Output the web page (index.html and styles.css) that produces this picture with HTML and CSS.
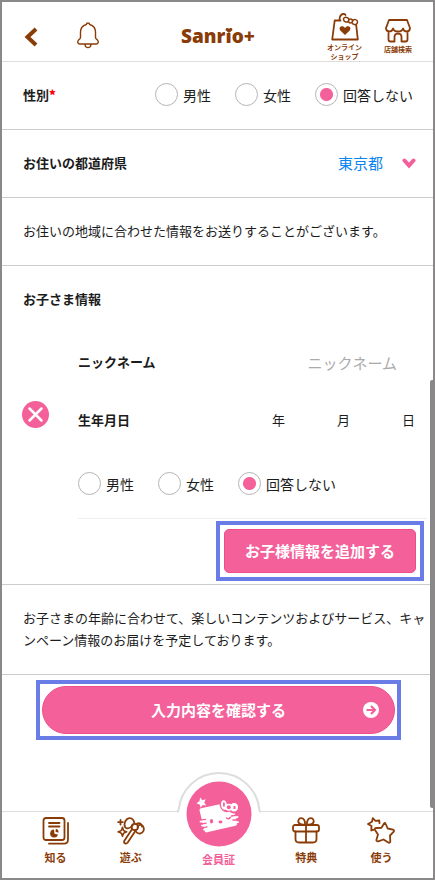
FILE: index.html
```html
<!DOCTYPE html>
<html lang="ja">
<head>
<meta charset="utf-8">
<meta name="viewport" content="width=device-width, initial-scale=1">
<title>Sanrio+</title>
<link rel="stylesheet" href="styles.css">
</head>
<body>
<header class="header">
  <div class="header-side">
    <a class="back" href="#" aria-label="戻る">
      <svg width="14" height="20" viewBox="0 0 14 20"><path d="M12 2 3.500 10l8.500 8" class="thick"/></svg>
    </a>
    <a class="bell" href="#" aria-label="お知らせ">
      <svg width="24" height="28" viewBox="0 0 24 28" class="line"><path d="M10.300 3.500c.4-2 3-2 3.400 0 3.500 1 5.800 4 5.800 7.500v5.500c0 1 .7 1.500 1.700 2.300 2 1.700 1 4.200-1 4.200H3.800c-2 0-3-2.500-1-4.200 1-.8 1.700-1.300 1.700-2.300V11c0-3.500 2.300-6.500 5.800-7.500zM9 23.500c.4 4.200 5.600 4.200 6 0"/></svg>
    </a>
  </div>
  <a class="logo" href="#">Sanrio+<svg class="logo-heart" width="8" height="5" viewBox="0 0 8 5"><path d="M4 5 1 2.500C-.5.8 2.300-1 4 .8 5.700-1 8.500.8 7 2.500z"/></svg></a>
  <div class="header-side header-links">
    <a class="header-link" href="#">
      <svg width="28" height="28" viewBox="0 0 28 28" class="line bold"><path d="M9.500 7.500H3.700L1.200 26.500h25.600L25.200 12M8.500 7c0-3 1.200-5.500 3.500-6 1.200-.2 2 .2 2.500 1"/><path class="fine" d="M18 6.500c-1-3-5.500-3-5.500-.2 0 2.500 3 3.500 5 2M21.500 8c1.500-2.500 5-1.500 5 1s-2.500 3.500-5 1.700"/><circle class="fine" cx="19.500" cy="8" r="2"/><path class="solid" d="M14 22 9.300 17.500c-2.600-3.500 2.500-6 4.700-2.500 2.200-3.500 7.300-1 4.700 2.500z"/></svg>
      <span>オンライン<br>ショップ</span>
    </a>
    <a class="header-link shop" href="#">
      <svg width="26" height="24" viewBox="0 0 26 24" class="line bold"><path d="M4 1h18l3 8c0 4.500-6 4.500-7 .5-1 4-9 4-10 0-1 4-7 4-7-.5zM3.500 13.500v7c0 1.500.7 2 2 2h4V18c0-4.500 7-4.500 7 0v4.500h4c1.300 0 2-.5 2-2v-7"/></svg>
      <span>店舗検索</span>
    </a>
  </div>
</header>

<main class="main">
  <form>
    <div class="row" role="radiogroup" aria-labelledby="sex-label">
      <span class="label" id="sex-label">性別<b class="required">*</b></span>
      <div class="radios">
        <label class="radio"><input type="radio" name="sex">男性</label>
        <label class="radio"><input type="radio" name="sex">女性</label>
        <label class="radio"><input type="radio" name="sex" checked>回答しない</label>
      </div>
    </div>

    <div class="row">
      <label class="label" for="pref">お住いの都道府県</label>
      <div class="select">
        <select id="pref"><option>東京都</option></select>
        <svg class="chevron" width="14" height="11" viewBox="0 0 14 11"><path d="m2.500 2.500 4.500 5 4.500-5"/></svg>
      </div>
    </div>

    <p class="row text">お住いの地域に合わせた情報をお送りすることがございます。</p>

    <section class="children">
      <h2 class="label children-title">お子さま情報</h2>
      <div class="child">
        <button type="button" class="remove" aria-label="削除">
          <svg width="27" height="27" viewBox="0 0 27 27"><path d="m7.500 7.500 12 12m0-12-12 12"/></svg>
        </button>
        <div class="child-fields">
          <div class="field">
            <label class="label" for="nick">ニックネーム</label>
            <input class="nick" id="nick" type="text" placeholder="ニックネーム">
          </div>
          <div class="field">
            <span class="label">生年月日</span>
            <div class="date">
              <label><input type="text" inputmode="numeric">年</label>
              <label><input type="text" inputmode="numeric">月</label>
              <label><input type="text" inputmode="numeric">日</label>
            </div>
          </div>
          <div class="radios child-radios" role="radiogroup" aria-label="性別">
            <label class="radio"><input type="radio" name="child-sex">男性</label>
            <label class="radio"><input type="radio" name="child-sex">女性</label>
            <label class="radio"><input type="radio" name="child-sex" checked>回答しない</label>
          </div>
        </div>
      </div>
      <div class="highlight add-box">
        <button type="button" class="btn add">お子様情報を追加する</button>
      </div>
    </section>

    <p class="note text">お子さまの年齢に合わせて、楽しいコンテンツおよびサービス、キャンペーン情報のお届けを予定しております。</p>

    <div class="highlight submit-box">
      <button type="submit" class="btn submit">入力内容を確認する
        <svg class="submit-arrow" width="16" height="16" viewBox="0 0 16 16"><circle cx="8" cy="8" r="8"/><path d="M3.500 8h8M8 4l4 4-4 4"/></svg>
      </button>
    </div>
  </form>
  <div class="scrollbar"></div>
</main>

<nav class="nav">
  <a class="tab" href="#">
    <svg width="28" height="28" viewBox="0 0 28 28" class="line bold"><rect x="1.500" y="1" width="21" height="22" rx="2.500"/><path d="M26 6v16.500c0 3-1.500 4.200-4 4.200H7M7 6h10.500M7 9.500h10.500"/><path class="solid" d="M12 12.500a4 4 0 1 0 4 5l-3.500-.8zM13.800 11.800l-.3 3 3 .9c.3-2-.8-3.600-2.700-3.900z"/></svg>
    <span>知る</span>
  </a>
  <a class="tab" href="#">
    <svg width="28" height="28" viewBox="0 0 28 28" class="line bold"><path d="M15.500 8.500C12 13 7.500 12 7.500 7.500 7.500 3 11.500 0 14.500 1.500c2 1 2.700 3 3 5M20.500 10c1-2.500 4-3 5.500-.8 1.800 3 .5 6.800-2.800 7.300-2.700.4-4.500-1.500-4.700-3.500"/><circle cx="17.800" cy="10" r="3.200"/><path d="M20 6.500c3-.8 5 .5 5 3M14.500 13 7.200 24c-.7 2.500 2 3.500 3.500 1.500L18 14.500M5.500 10.500c.5 3 1.200 3.700 4 4.300-2.800.6-3.500 1.300-4 4.200-.6-2.900-1.300-3.600-4.200-4.200 2.900-.6 3.600-1.300 4.200-4.300zM3.500 3v4.500M1.200 5.200h4.600"/></svg>
    <span>遊ぶ</span>
  </a>
  <a class="tab member" href="#">
    <svg class="bump" width="84" height="43" viewBox="0 0 84 43"><path d="M0 39.500c1.200 0 1.500-.5 1.700-2a40.500 40.500 0 0 1 80.600 0c.2 1.500.5 2 1.700 2V43H0z" class="bump-fill"/><path d="M0 39.500c1.200 0 1.500-.5 1.700-2a40.500 40.500 0 0 1 80.600 0c.2 1.500.5 2 1.700 2" class="bump-line"/></svg>
    <svg class="card" width="66" height="66" viewBox="0 0 66 66">
      <circle class="pink" cx="33" cy="33" r="32.500"/>
      <path class="white" d="m14.200 16.500 2.200 2.700 3.300-.9-1.500 3.200 2 2.900-3.500-.3-2.100 2.700-.9-3.300-3.300-1.300 3-1.900z"/>
      <path class="white" d="m15 27.300 20-4.300 13.500 7 2.500 12.500q.3 1.800-1.500 2.200L21 51.300q-2 .5-2.500-1.500l-5-20.500q-.3-1.600 1.500-2z"/>
      <path class="pink" d="M33.500 22c0-6 7-6 9 0 4-3 12-2 11.500 4.500 0 6-6 8-10.500 4-5 2.500-10-2-10-8.500z"/>
      <path class="white" d="M41 24c-.5-6-6-6.500-6-1 0 4 2 6.500 5 5.700M45 23.500c3-3 7.500-1 7 3.200-.5 4-4.500 5-7 2.500"/>
      <circle class="white" cx="42.800" cy="26.300" r="3.500"/>
      <circle class="pink" cx="42.800" cy="26.300" r="2"/>
      <path class="pink" d="M37 21.500h1.800v4H37zM47.500 25h2v3h-2z"/>
      <path class="cut" d="m15.500 39 4-.5m-3.500 4.500 4-.8m-3 4.700 4-1M45.500 35l4.500-.8M47 39h4"/>
      <path class="whisker" d="m14.500 40.700 5-.5m-3.500 4.500 4.500-.7M18 48.500l4-1M47 37l4.500-1M48 41.200h4"/>
      <ellipse class="pink" cx="25.500" cy="40.300" rx="1.600" ry="2.200"/>
      <ellipse class="pink" cx="34.500" cy="41" rx="2" ry="1.400"/>
      <path class="cut" d="M40.500 37q2 1.800 4-.8"/>
    </svg>
    <span>会員証</span>
  </a>
  <a class="tab" href="#">
    <svg width="28" height="28" viewBox="0 0 28 28" class="line bold"><rect x="1" y="8" width="26" height="6.500" rx="2"/><path d="M3.500 14.500V22c0 2.500 1 3.500 3.500 3.500h14c2.500 0 3.500-1 3.500-3.500v-7.500M14 8v17.500M13 7.500C8 8 5.500 6 6.500 3c1-2.500 4.200-2.500 5.700 0 .8 1.300 1 3 .8 4.500zM15 7.500c5 .5 7.500-1.500 6.500-4.500-1-2.500-4.200-2.500-5.700 0-.8 1.300-1 3-.8 4.500z"/></svg>
    <span>特典</span>
  </a>
  <a class="tab" href="#">
    <svg width="28" height="28" viewBox="0 0 28 28" class="line bold"><path d="m18.500 6.500 2.200 5 5.300 1.200c1.300.5 1.200 1.500.5 2.200L23 18.500l.3 6c-.2 1.300-1.200 1.500-2 1l-4.800-3-5.300 1.800c-1.400.3-2-.6-1.700-1.700l1.500-5-3-4.700c-.5-1.200 0-1.900 1.200-1.900l5.300-.2 2.700-4.500c.6-.8 1.100-.6 1.300.2z"/><path d="m12.500 6.200-.2-2.700-3.800.3-2.700-2.600-.8 3.600L1 7l3.500 2-.2 4.500 2-.7"/></svg>
    <span>使う</span>
  </a>
</nav>
</body>
</html>
```
FILE: styles.css
```css
* { box-sizing: border-box; }

body {
  margin: 0;
  min-height: 100vh;
  display: flex;
  flex-direction: column;
  border: 2px solid #8a8889;
  background: #fff;
  color: #1c1c1c;
  font-family: "Noto Sans CJK JP", sans-serif;
  font-size: 13px;
}

a { color: #8a3c08; text-decoration: none; }
svg { display: block; flex: none; }
button, input, select { font-family: inherit; }
form, p, h2 { margin: 0; }

.line { fill: none; stroke: #8a3c08; stroke-width: 1.4; stroke-linecap: round; stroke-linejoin: round; }
.bold { stroke-width: 1.8; }
.fine { stroke-width: 1.5; }
.solid { fill: #8a3c08; stroke: none; }
.thick { fill: none; stroke: #8a3c08; stroke-width: 4; }

.header {
  height: 60px;
  display: grid;
  grid-template-columns: 1fr auto 1fr;
  align-items: center;
  padding: 0 21px 0 22px;
  border-bottom: 1px solid #ddd;
}
.header-side { display: flex; align-items: center; gap: 38px; }
.back { padding-top: 10px; }
.bell { padding-top: 6px; }
.logo {
  position: relative;
  padding-top: 8px;
  font: 800 19px/28px "Open Sans", sans-serif;
}
.logo-heart {
  position: absolute;
  left: 44px;
  top: 14px;
  fill: #8a3c08;
  background: #fff;
}
.header-links { justify-content: flex-end; align-items: flex-start; gap: 22px; padding-top: 11px; }
.header-link {
  display: flex;
  flex-direction: column;
  align-items: center;
  gap: 2px;
  font-size: 7px;
  line-height: 9px;
  font-weight: 700;
  text-align: center;
}
.shop { padding-top: 6px; }

.main { position: relative; flex: 1; }

.row {
  min-height: 68px;
  display: flex;
  align-items: center;
  justify-content: space-between;
  padding: 0 17px 2px 21px;
  border-bottom: 1px solid #ccc;
}
.label { font-size: 13px; line-height: 20px; font-weight: 700; }
.required { color: #f00; }
.text { font-size: 13px; line-height: 22px; }

.radios { display: flex; align-items: center; gap: 24px; padding-right: 3px; }
.radio { display: flex; align-items: center; gap: 5px; font-size: 14px; line-height: 22px; white-space: nowrap; }
.radio input {
  appearance: none;
  width: 23px;
  height: 23px;
  margin: 0;
  border: 1px solid #b5b5b5;
  border-radius: 50%;
}
.radio input:checked { background: radial-gradient(circle, #f3609a 6px, #fff 7px); }

.select { position: relative; }
.select select {
  appearance: none;
  border: 0;
  padding: 0 32px 0 0;
  background: none;
  color: #0a84f0;
  font-size: 15px;
  line-height: 22px;
}
.chevron {
  position: absolute;
  right: 0;
  top: 6px;
  pointer-events: none;
  fill: none;
  stroke: #f3609a;
  stroke-width: 4;
  stroke-linecap: round;
}

.children {
  display: flex;
  flex-direction: column;
  border-bottom: 1px solid #ccc;
}
.children-title { padding: 23px 21px 24px; }
.child { display: flex; align-items: center; padding: 0 6px 0 20px; }
.remove {
  width: 27px;
  height: 27px;
  padding: 0;
  margin: 0 29px 24px 0;
  border: 0;
  border-radius: 50%;
  background: #f3609a;
}
.remove path { fill: none; stroke: #fff; stroke-width: 2.5; stroke-linecap: round; }
.child-fields { flex: 1; min-width: 0; border-bottom: 1px solid #eee; }
.field { height: 58px; display: flex; align-items: center; justify-content: space-between; }
.nick {
  width: 200px;
  padding: 0;
  margin-right: 30px;
  border: 0;
  outline: 0;
  text-align: right;
  font-size: 15px;
}
.nick::placeholder { color: #aaa; }
.date { display: flex; gap: 12px; padding: 0 12px 2px 0; }
.date label { display: flex; align-items: center; }
.date input { width: 40px; height: 24px; padding: 0; border: 0; outline: 0; text-align: right; }
.child-radios { height: 69px; }

.highlight { border: 4px solid #6a7de6; }
.btn {
  width: 100%;
  border: 1px solid #ee4f8c;
  background: #f3609a;
  color: #fff;
  font-size: 15px;
  font-weight: 700;
}
.add-box { align-self: flex-end; padding: 4px; margin: 2px 9px 3px; }
.add { height: 44px; padding: 0 20px 2px; border-radius: 5px; }

.note { padding: 22px 0 23px 21px; border-bottom: 1px solid #ccc; }
.submit-box { margin: 5px 32px 33px 34px; padding: 2px; }
.submit { position: relative; height: 48px; padding-bottom: 3px; border-radius: 24px; }
.submit-arrow { position: absolute; right: 15px; top: 15px; }
.submit-arrow circle { fill: #fff; }
.submit-arrow path { fill: none; stroke: #f3609a; stroke-width: 2.2; }

.scrollbar {
  position: absolute;
  right: 0;
  top: 318px;
  bottom: 3px;
  width: 3px;
  border-radius: 2px 0 0 2px;
  background: #888;
}

.nav {
  display: grid;
  grid-template-columns: 3fr 3fr 4fr 3fr 3fr;
  padding: 5px 14px 13px 16px;
  border-top: 1px solid #ddd;
}
.tab {
  position: relative;
  display: flex;
  flex-direction: column;
  align-items: center;
  justify-content: space-between;
  height: 48px;
  font-size: 11px;
  line-height: 16px;
  font-weight: 700;
}
.member { height: 86px; margin-top: -36px; margin-bottom: -3px; color: #f3609a; }
.bump { position: absolute; top: -9px; }
.bump-fill { fill: #fff; }
.bump-line { fill: none; stroke: #ddd; stroke-width: 2; }
.card { position: relative; }
.pink { fill: #f3609a; }
.white { fill: #fff; }
.cut { fill: none; stroke: #f3609a; stroke-width: 1.4; stroke-linecap: round; }
.whisker { fill: none; stroke: #fff; stroke-width: 1.8; stroke-linecap: round; }
```
